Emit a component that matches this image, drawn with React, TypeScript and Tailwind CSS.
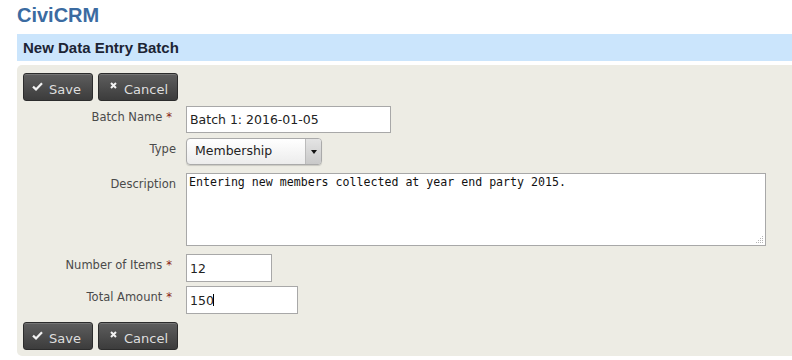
import React from 'react';

const sans = { fontFamily: '"DejaVu Sans", Verdana, sans-serif' };

function CheckIcon() {
  return (
    <svg width="11" height="9" viewBox="0 0 11 9" className="mt-[1px]">
      <path d="M1 4.6 L4 7.4 L10 1.2" fill="none" stroke="#f2f2f2" strokeWidth="2.2" />
    </svg>
  );
}

function XIcon() {
  return (
    <svg width="7" height="7" viewBox="0 0 7 7" className="mt-[1px]">
      <path d="M1 1 L6 6 M6 1 L1 6" fill="none" stroke="#f2f2f2" strokeWidth="2" />
    </svg>
  );
}

function ActionButtons() {
  return (
    <div className="flex gap-[5px]">
      <button className="flex h-[28px] w-[70px] items-start rounded-[3px] border border-[#2c2c2c] bg-gradient-to-b from-[#5e5e5e] to-[#3c3c3c] pl-[8px] pt-[7px] text-[13px] leading-[16px] text-[#dedede] shadow-[inset_0_1px_0_rgba(255,255,255,0.15)]">
        <CheckIcon />
        <span className="ml-[6px] mt-[1px]">Save</span>
      </button>
      <button className="flex h-[28px] w-[80px] items-start rounded-[3px] border border-[#2c2c2c] bg-gradient-to-b from-[#5e5e5e] to-[#3c3c3c] pl-[11px] pt-[7px] text-[13px] leading-[16px] text-[#dedede] shadow-[inset_0_1px_0_rgba(255,255,255,0.15)]">
        <XIcon />
        <span className="ml-[7px] mt-[1px]">Cancel</span>
      </button>
    </div>
  );
}

function Row({ label, required, children, className }: { label: string; required?: boolean; children: React.ReactNode; className?: string }) {
  return (
    <div className={'flex items-start ' + (className || '')}>
      <div className="w-[153px] pt-[3px] text-right text-[11.5px] leading-[16px] text-[#4a4a4a]">
        {label}
        {required && <span className="ml-[4px] mr-[4px] text-[#8a1f11]">*</span>}
      </div>
      <div className="ml-[10px]">{children}</div>
    </div>
  );
}

export default function App() {
  return (
    <div className="min-h-[360px] w-[792px] bg-white pl-[17px]" style={sans}>
      <h1 className="mt-[5px] text-[20px] font-bold leading-[20px] text-[#3b6ba1]" style={{ fontFamily: '"Liberation Sans", Arial, sans-serif' }}>
        CiviCRM
      </h1>
      <div className="mt-[9px] h-[27px] bg-[#cbe5fc] pl-[6px] text-[15px] font-bold leading-[27px] text-[#1c2434]" style={{ fontFamily: '"Liberation Sans", Arial, sans-serif' }}>
        New Data Entry Batch
      </div>

      <div className="mt-[4px] h-[291px] rounded-l-[5px] bg-[#edece4] pl-[6px] pt-[8px]">
        <ActionButtons />

        <Row label="Batch Name" required className="mt-[5px]">
          <input
            readOnly
            value="Batch 1: 2016-01-05"
            className="h-[27px] w-[205px] border border-[#a8a8a8] bg-white px-[3px] text-[12.5px] text-[#222] outline-none"
          />
        </Row>

        <Row label="Type" className="mt-[5px]">
          <div className="relative flex h-[27px] w-[136px] items-center rounded-[4px] border border-[#aaa] bg-gradient-to-b from-white to-[#ececec] pl-[8px] text-[12.5px] text-[#222] shadow-[0_1px_1px_rgba(0,0,0,0.15)]">
            Membership
            <div className="absolute right-0 top-0 flex h-full w-[16px] items-center justify-center rounded-r-[3px] border-l border-[#bbb] bg-gradient-to-b from-[#e4e4e4] to-[#c9c9c9]">
              <svg width="6" height="4" viewBox="0 0 6 4">
                <path d="M0 0 H6 L3 4 Z" fill="#111" />
              </svg>
            </div>
          </div>
        </Row>

        <Row label="Description" className="mt-[8px]">
          <div className="relative">
            <textarea
              readOnly
              value="Entering new members collected at year end party 2015."
              className="block h-[73px] w-[580px] resize-none border border-[#a8a8a8] bg-white px-[2px] pt-[1px] text-[11.6px] leading-[14px] text-[#111] outline-none"
              style={{ fontFamily: '"DejaVu Sans Mono", monospace' }}
            />
            <svg width="8" height="8" viewBox="0 0 8 8" className="absolute bottom-[2px] right-[2px]">
              <g fill="#b5b5b5">
                <rect x="6" y="0" width="1" height="1" />
                <rect x="4" y="2" width="1" height="1" />
                <rect x="6" y="2" width="1" height="1" />
                <rect x="2" y="4" width="1" height="1" />
                <rect x="4" y="4" width="1" height="1" />
                <rect x="6" y="4" width="1" height="1" />
                <rect x="0" y="6" width="1" height="1" />
                <rect x="2" y="6" width="1" height="1" />
                <rect x="4" y="6" width="1" height="1" />
                <rect x="6" y="6" width="1" height="1" />
              </g>
            </svg>
          </div>
        </Row>

        <Row label="Number of Items" required className="mt-[8px]">
          <input
            readOnly
            value="12"
            className="h-[28px] w-[86px] border border-[#a8a8a8] bg-white px-[3px] text-[12.5px] text-[#222] outline-none"
          />
        </Row>

        <Row label="Total Amount" required className="mt-[4px]">
          <div className="relative">
            <input
              readOnly
              value="150"
              className="h-[28px] w-[112px] border border-[#a8a8a8] bg-white px-[3px] text-[12.5px] text-[#222] outline-none"
            />
            <span className="absolute left-[27px] top-[8px] h-[12px] w-[1px] bg-black" />
          </div>
        </Row>

        <div className="mt-[8px]">
          <ActionButtons />
        </div>
      </div>
    </div>
  );
}
